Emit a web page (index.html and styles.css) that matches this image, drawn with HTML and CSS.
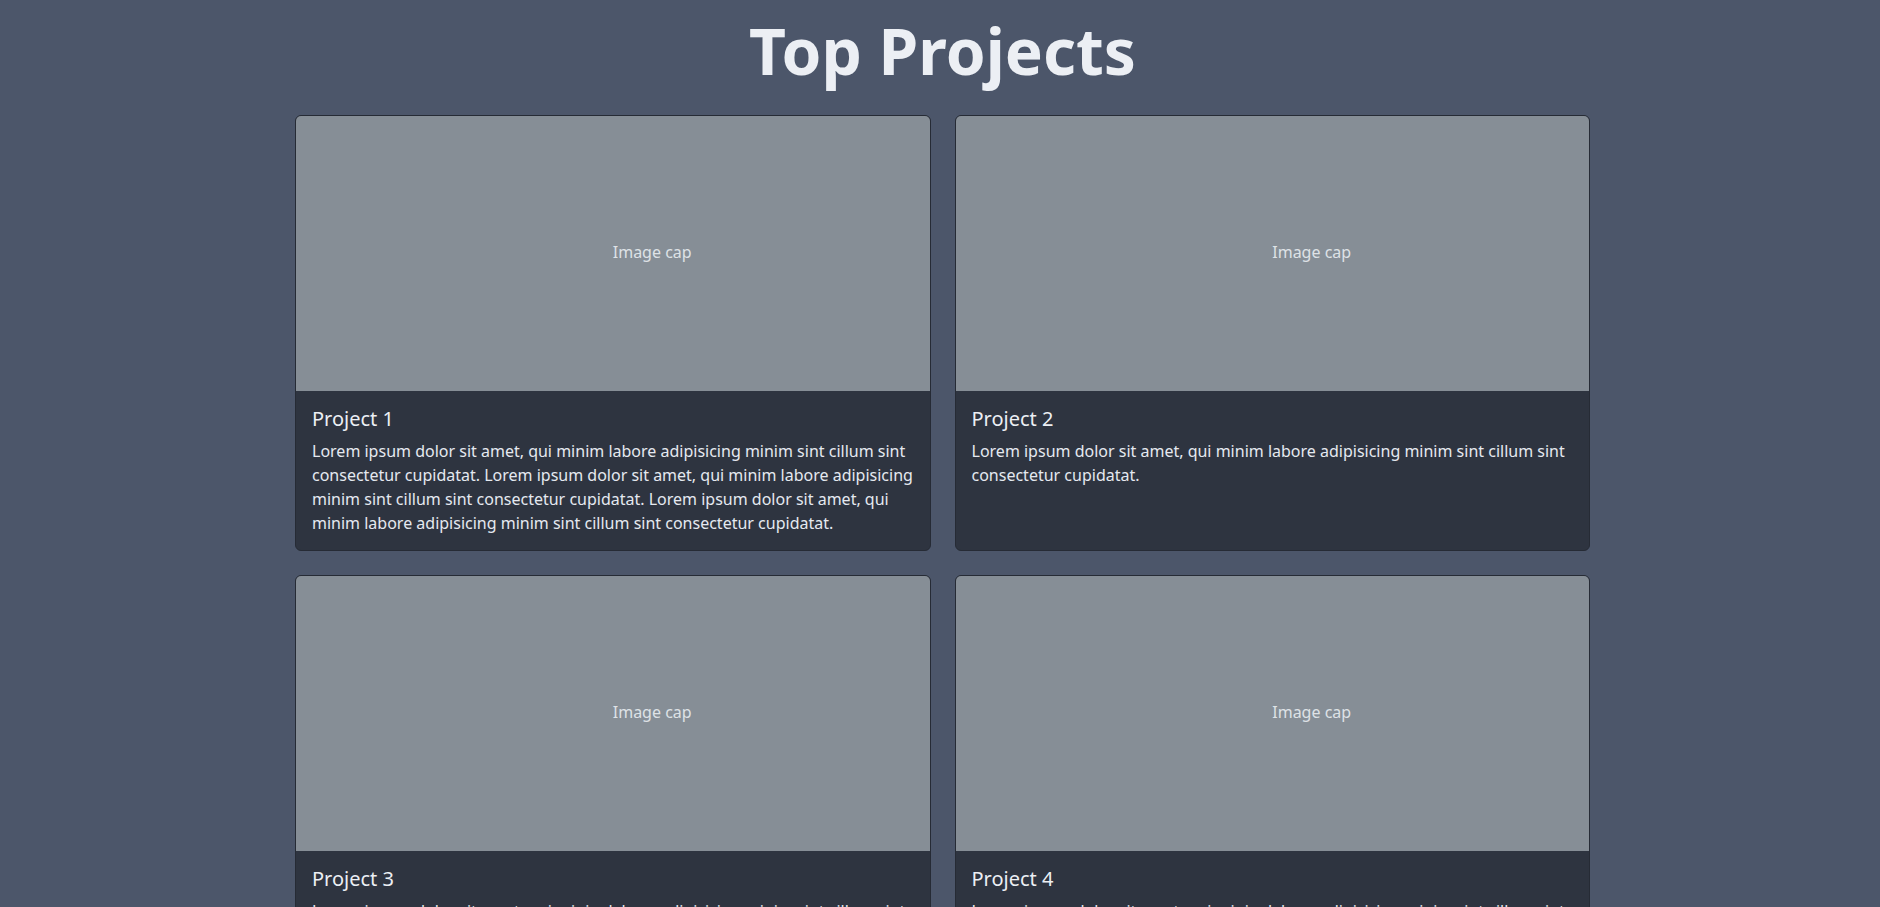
FILE: index.html
```html
<!DOCTYPE html>
<html lang="en">
<head>
<meta charset="utf-8">
<title>Top Projects</title>
<link rel="stylesheet" href="styles.css">
</head>
<body>
<main class="page">
  <h1 class="page-title">Top Projects</h1>
  <div class="grid">
    <div class="card">
      <div class="card-img"><span>Image cap</span></div>
      <div class="card-body">
        <h5 class="card-title">Project 1</h5>
        <p class="card-text">Lorem ipsum dolor sit amet, qui minim labore adipisicing minim sint cillum sint consectetur cupidatat. Lorem ipsum dolor sit amet, qui minim labore adipisicing minim sint cillum sint consectetur cupidatat. Lorem ipsum dolor sit amet, qui minim labore adipisicing minim sint cillum sint consectetur cupidatat.</p>
      </div>
    </div>
    <div class="card">
      <div class="card-img"><span>Image cap</span></div>
      <div class="card-body">
        <h5 class="card-title">Project 2</h5>
        <p class="card-text">Lorem ipsum dolor sit amet, qui minim labore adipisicing minim sint cillum sint consectetur cupidatat.</p>
      </div>
    </div>
    <div class="card">
      <div class="card-img"><span>Image cap</span></div>
      <div class="card-body">
        <h5 class="card-title">Project 3</h5>
        <p class="card-text">Lorem ipsum dolor sit amet, qui minim labore adipisicing minim sint cillum sint consectetur cupidatat. Lorem ipsum dolor sit amet, qui minim labore adipisicing minim sint cillum sint consectetur cupidatat.</p>
      </div>
    </div>
    <div class="card">
      <div class="card-img"><span>Image cap</span></div>
      <div class="card-body">
        <h5 class="card-title">Project 4</h5>
        <p class="card-text">Lorem ipsum dolor sit amet, qui minim labore adipisicing minim sint cillum sint consectetur cupidatat. Lorem ipsum dolor sit amet, qui minim labore adipisicing minim sint cillum sint consectetur cupidatat.</p>
      </div>
    </div>
  </div>
</main>
</body>
</html>
```

FILE: styles.css
```css
html, body {
  margin: 0;
  padding: 0;
}
body {
  background: #4c566a;
  font-family: "Noto Sans", "Open Sans", sans-serif;
  font-size: 16px;
  line-height: 1.5;
  color: #e5e9f0;
  padding-left: 5px;
  min-height: 907px;
  box-sizing: border-box;
}
.page {
  width: 1295px;
  margin: 0 auto;
  padding-top: 13px;
}
.page-title {
  margin: 0 0 25px 0;
  text-align: center;
  font-size: 64px;
  font-weight: 700;
  line-height: 1.2;
  color: #eceff4;
}
.grid {
  display: grid;
  grid-template-columns: 1fr 1fr;
  column-gap: 24px;
  row-gap: 24px;
}
.card {
  display: flex;
  flex-direction: column;
  background: #2e3440;
  border: 1px solid #262b35;
  border-radius: 6px;
  overflow: hidden;
}
.card-img {
  height: 275px;
  background: #868e96;
  display: flex;
  align-items: center;
  justify-content: flex-start;
  padding-left: 50%;
  padding-bottom: 2px;
  box-sizing: border-box;
  color: #dee2e6;
  font-size: 16px;
}
.card-body {
  flex: 1;
  padding: 16px 16px 15px;
}
.card-title {
  margin: 0 0 8px 0;
  font-size: 20px;
  font-weight: 400;
  line-height: 1.2;
  color: #eceff4;
}
.card-text {
  margin: 0;
}
```
